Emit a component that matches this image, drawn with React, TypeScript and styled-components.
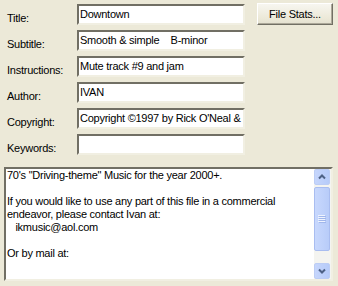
import React from "react";
import styled, { createGlobalStyle } from "styled-components";

const Global = createGlobalStyle`
  html, body { margin: 0; padding: 0; background: #ece9d8; }
  body { font-family: "Liberation Sans", Arial, sans-serif; font-size: 11px; color: #000; letter-spacing: -0.25px; }
`;

const Page = styled.div`
  width: 338px;
  height: 286px;
  background: #ece9d8;
  display: flex;
  flex-direction: column;
  box-sizing: border-box;
  padding: 4px 5px 0 4px;
`;

const Top = styled.div`
  display: flex;
  align-items: flex-start;
`;

const Form = styled.div`
  display: flex;
  flex-direction: column;
  gap: 5px;
`;

const Row = styled.div`
  display: flex;
  align-items: center;
  height: 21px;
`;

const Label = styled.div`
  width: 73px;
  padding-left: 3px;
  padding-top: 6px;
  box-sizing: border-box;
  white-space: nowrap;
`;

const Field = styled.div`
  width: 168px;
  height: 21px;
  box-sizing: border-box;
  background: #fff;
  border-top: 2px solid #716f64;
  border-left: 2px solid #716f64;
  border-right: 2px solid #f1efe2;
  border-bottom: 2px solid #f1efe2;
  box-shadow: inset -1px -1px 0 #fff;
  padding: 2px 0 0 1px;
  white-space: pre;
  overflow: hidden;
  line-height: 13px;
`;

const Button = styled.button`
  margin-left: 12px;
  margin-top: -1px;
  width: 78px;
  height: 22px;
  font-family: "Liberation Sans", Arial, sans-serif;
  font-size: 11px;
  letter-spacing: -0.25px;
  color: #000;
  background: linear-gradient(#f7f6f0, #ece9d8 70%, #e3e0d0);
  border: 1px solid #fff;
  border-right-color: #716f64;
  border-bottom-color: #716f64;
  box-shadow: inset -1px -1px 0 #aca899;
  padding: 0 0 1px;
`;

const Memo = styled.div`
  margin-top: 12px;
  width: 329px;
  height: 114px;
  box-sizing: border-box;
  background: #fff;
  border-top: 2px solid #716f64;
  border-left: 2px solid #716f64;
  border-right: 2px solid #f1efe2;
  border-bottom: 2px solid #f1efe2;
  display: flex;
`;

const MemoText = styled.div`
  flex: 1;
  padding: 0 0 0 1px;
  line-height: 13px;
  white-space: pre;
  overflow: hidden;
`;

const Scroll = styled.div`
  width: 17px;
  background: #f4f4f0;
  display: flex;
  flex-direction: column;
  gap: 1px;
`;

const Arrow = styled.div`
  height: 16px;
  box-sizing: border-box;
  margin: 0 1px 0 0;
  border: 1px solid #bccdf5;
  border-radius: 2px;
  background: linear-gradient(90deg, #c6d6fc, #b6cbf9);
  display: flex;
  align-items: center;
  justify-content: center;
`;

const Thumb = styled.div`
  height: 64px;
  margin: 1px 1px 0 0;
  box-sizing: border-box;
  border: 1px solid #a9bdf0;
  border-radius: 2px;
  background: linear-gradient(90deg, #c8d8fd, #b8ccf9);
  display: flex;
  align-items: center;
  justify-content: center;
`;

const Track = styled.div`
  flex: 1;
`;

const Chevron = ({ down }: { down?: boolean }) => (
  <svg width="8" height="6" viewBox="0 0 8 6">
    <path
      d={down ? "M1 1.5 L4 4.5 L7 1.5" : "M1 4.5 L4 1.5 L7 4.5"}
      fill="none"
      stroke="#4d6185"
      strokeWidth="2"
    />
  </svg>
);

const Grip = () => (
  <svg width="8" height="8" viewBox="0 0 8 8">
    <path d="M0 0.5H7 M0 2.5H7 M0 4.5H7 M0 6.5H7" stroke="#eef3fe" strokeWidth="1" />
    <path d="M1 1.5H8 M1 3.5H8 M1 5.5H8 M1 7.5H8" stroke="#8ca5e2" strokeWidth="1" opacity="0.6" />
  </svg>
);

const fields = [
  ["Title:", "Downtown"],
  ["Subtitle:", "Smooth & simple    B-minor"],
  ["Instructions:", "Mute track #9 and jam"],
  ["Author:", "IVAN"],
  ["Copyright:", "Copyright \u00a91997 by Rick O'Neal &"],
  ["Keywords:", ""],
];

const memo = `70's "Driving-theme" Music for the year 2000+.

If you would like to use any part of this file in a commercial
endeavor, please contact Ivan at:
   ikmusic@aol.com

Or by mail at:
`;

export default function App() {
  return (
    <>
      <Global />
      <Page>
        <Top>
          <Form>
            {fields.map(([l, v]) => (
              <Row key={l}>
                <Label>{l}</Label>
                <Field>{v}</Field>
              </Row>
            ))}
          </Form>
          <Button>File Stats...</Button>
        </Top>
        <Memo>
          <MemoText>{memo}</MemoText>
          <Scroll>
            <Arrow><Chevron /></Arrow>
            <Thumb><Grip /></Thumb>
            <Track />
            <Arrow><Chevron down /></Arrow>
          </Scroll>
        </Memo>
      </Page>
    </>
  );
}
